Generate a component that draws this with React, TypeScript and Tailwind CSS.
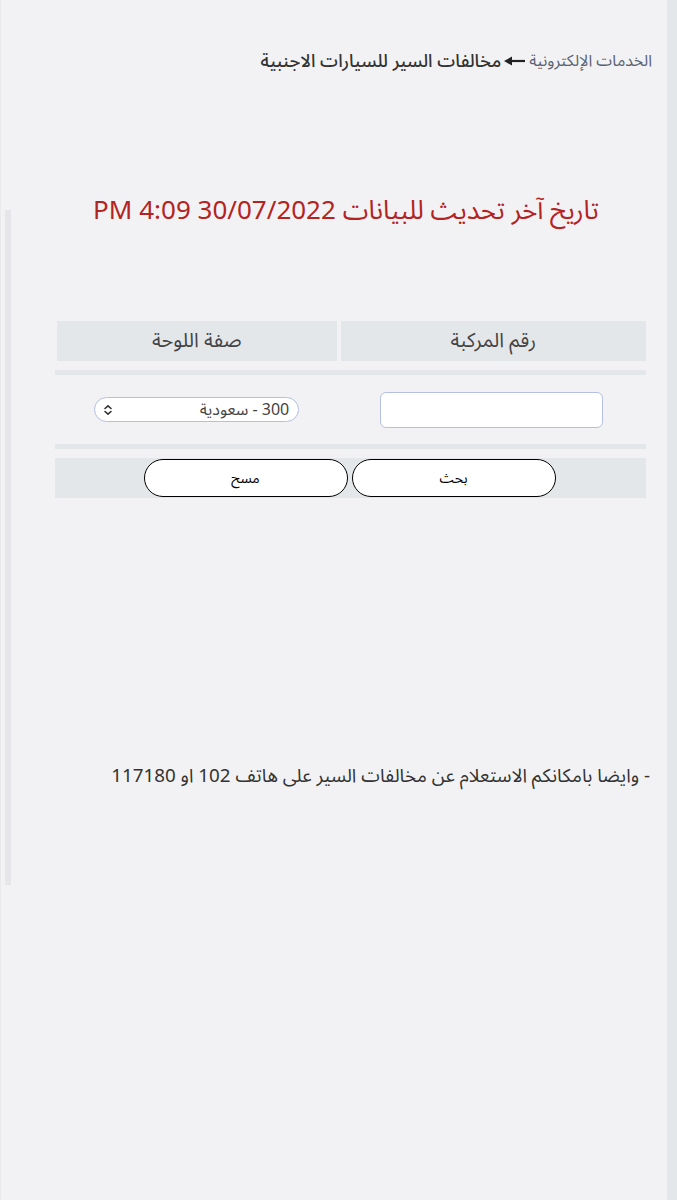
import React from "react";

const font = { fontFamily: '"Noto Sans Arabic", "Noto Sans", "DejaVu Sans", sans-serif' };

function SortIcon() {
    return (
        <svg width="12" height="12" viewBox="0 0 12 12" fill="none" stroke="#333" strokeWidth="1.6" strokeLinecap="round" strokeLinejoin="round">
            <path d="M3 4.5 6 1.8 9 4.5" />
            <path d="M3 7.5 6 10.2 9 7.5" />
        </svg>
    );
}

function ArrowLeft() {
    return (
        <svg width="22" height="10" viewBox="0 0 22 10" className="mx-[3px]">
            <path d="M6 3.9H21v2.2H6z" fill="#222" />
            <path d="M0 5 8 0.5v9z" fill="#222" />
        </svg>
    );
}

export default function App() {
    return (
        <div className="flex min-h-[1200px] w-full bg-[#f2f2f4]" style={font}>
            <div className="relative flex-1 border-l border-[#e8eaec]" dir="rtl">
                {/* scroll indicator */}
                <div className="absolute left-[4px] top-[210px] h-[675px] w-[6px] bg-[#e6e5e9]" />

                {/* Breadcrumb */}
                <div className="mt-[49px] flex h-[24px] items-center pr-[15px]">
                    <span className="text-[16px] text-[#5b6272]">الخدمات الإلكترونية</span>
                    <ArrowLeft />
                    <span className="text-[18px] font-medium text-[#333]">مخالفات السير للسيارات الاجنبية</span>
                </div>

                {/* Last update */}
                <h1 className="mt-[120px] pl-[24px] text-center text-[26px] leading-[36px] font-normal text-[#b3231f]">
                    تاريخ آخر تحديث للبيانات 30/07/2022 4:09 PM
                </h1>

                {/* Search table */}
                <div className="mr-[21px] ml-[54px] mt-[92px]">
                    <div className="flex gap-[4px] pl-[2px]">
                        <div className="flex h-[40px] flex-[306] items-center justify-center bg-[#e4e7ea] text-[20px] text-[#444]">رقم المركبة</div>
                        <div className="flex h-[40px] flex-[280] items-center justify-center bg-[#e4e7ea] text-[20px] text-[#444]">صفة اللوحة</div>
                    </div>
                    <div className="mt-[9px] h-[5px] bg-[#e4e7ea]" />
                    <div className="flex h-[69px] items-center">
                        <div className="flex flex-[306] justify-center pr-[2px]">
                            <input className="h-[36px] w-[223px] rounded-[6px] border border-[#b3c0e2] bg-white outline-none" />
                        </div>
                        <div className="flex flex-[284] justify-center">
                            <div className="flex h-[25px] w-[205px] items-center justify-between rounded-full border border-[#b3c0e2] bg-white pr-[9px] pl-[7px]">
                                <span className="text-[16px] leading-[20px] text-[#444]">300 - سعودية</span>
                                <SortIcon />
                            </div>
                        </div>
                    </div>
                    <div className="h-[5px] bg-[#e4e7ea]" />
                    <div className="mt-[9px] flex h-[40px] items-center justify-center gap-[4px] bg-[#e4e7ea] pr-[2px]">
                        <button className="h-[38px] w-[204px] rounded-full border-[1.5px] border-black bg-white text-[14px] text-black">بحث</button>
                        <button className="h-[38px] w-[204px] rounded-full border-[1.5px] border-black bg-white text-[14px] text-black">مسح</button>
                    </div>
                </div>

                {/* Note */}
                <p className="mt-[264px] pr-[17px] text-[18.8px] leading-[28px] text-[#333]">
                    - وايضا بامكانكم الاستعلام عن مخالفات السير على هاتف 102 او 117180
                </p>
            </div>
            <div className="w-[10px] bg-[#e4e7ea]" />
        </div>
    );
}
